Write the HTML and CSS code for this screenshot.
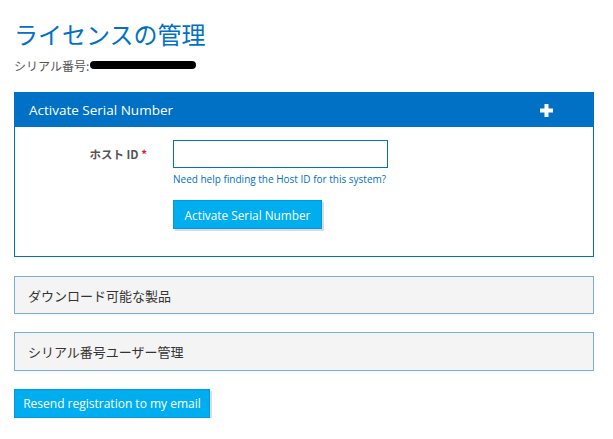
FILE: index.html
```html
<!DOCTYPE html>
<html lang="ja">
  <head>
    <meta charset="UTF-8" />
    <meta name="viewport" content="width=device-width, initial-scale=1.0" />
    <title>ライセンスの管理</title>

    <link rel="stylesheet" href="styles.css">
  </head>
  <body>
    <div class="page">
      <h1>ライセンスの管理</h1>
      <div class="serial">
        シリアル番号:<span class="redacted"></span>
      </div>

      <div class="panel">
        <div class="panel-header">
          <span>Activate Serial Number</span>
          <svg class="plus" width="13" height="13" viewBox="0 0 13 13">
            <rect x="4.5" y="0" width="4" height="13" fill="#fff" />
            <rect x="0" y="4.5" width="13" height="4" fill="#fff" />
          </svg>
        </div>
        <div class="panel-body">
          <div class="form-row">
            <label class="form-label" for="host-id">ホスト ID <span class="required">*</span></label>
            <div class="form-field">
              <input type="text" id="host-id" class="text-input" />
              <a class="help-link" href="#">Need help finding the Host ID for this system?</a>
              <button class="btn btn-activate">Activate Serial Number</button>
            </div>
          </div>
        </div>
      </div>

      <div class="section">ダウンロード可能な製品</div>
      <div class="section">シリアル番号ユーザー管理</div>

      <button class="btn btn-resend">Resend registration to my email</button>
    </div>
  </body>
</html>
```

FILE: styles.css
```css
body {
  margin: 0;
  font-family: "Open Sans", "Noto Sans CJK JP", sans-serif;
  color: #333;
  background: #fff;
}
.page {
  width: 580px;
  padding: 0 14px;
}
h1 {
  margin: 18px 0 0;
  font-family: "Noto Sans CJK JP", sans-serif;
  font-size: 24px;
  font-weight: normal;
  line-height: 32px;
  color: #0071c5;
}
.serial {
  margin-top: 7px;
  font-family: "Noto Sans CJK JP", sans-serif;
  font-size: 12px;
  line-height: 18px;
  color: #555;
  display: flex;
  align-items: center;
}
.redacted {
  display: inline-block;
  width: 106px;
  height: 8px;
  margin: 0 0 2px 1px;
  background: #000;
  border-radius: 4px;
}
.panel {
  margin-top: 17px;
  border: 1px solid #0071c5;
}
.panel-header {
  height: 34px;
  background: #0071c5;
  color: #fff;
  font-size: 13.5px;
  display: flex;
  align-items: center;
  justify-content: space-between;
  padding: 0 40px 0 14px;
}
.panel-body {
  padding: 13px 0 27px;
}
.form-row {
  display: flex;
}
.form-label {
  width: 132px;
  text-align: right;
  padding-top: 6px;
  font-family: "Noto Sans CJK JP", sans-serif;
  font-size: 11.5px;
  font-weight: bold;
  color: #555;
}
.required {
  color: #e02020;
}
.form-field {
  margin-left: 26px;
  display: flex;
  flex-direction: column;
  align-items: flex-start;
}
.text-input {
  width: 215px;
  height: 28px;
  box-sizing: border-box;
  border: 1px solid #0071c5;
  margin: 0;
}
.help-link {
  margin-top: 5px;
  font-size: 10px;
  line-height: 13px;
  color: #0071c5;
  text-decoration: none;
}
.btn {
  margin-top: 14px;
  height: 29px;
  padding: 0;
  border: 1px solid #0098e0;
  background: #00aeef;
  color: #fff;
  font-family: "Open Sans", sans-serif;
  font-size: 12px;
  box-shadow: 2px 2px 0 #dcdcdc;
  cursor: pointer;
}
.btn-activate {
  width: 149px;
  font-size: 11.8px;
}
.section {
  margin-top: 19px;
  height: 38px;
  box-sizing: border-box;
  border: 1px solid #7aaed8;
  background: #f4f4f4;
  display: flex;
  align-items: center;
  padding-left: 13px;
  font-family: "Noto Sans CJK JP", sans-serif;
  font-size: 13px;
  color: #333;
  box-shadow: 0 2px 2px rgba(0, 0, 0, 0.03);
}
.section + .section {
  margin-top: 18px;
  height: 39px;
}
.btn-resend {
  margin-top: 18px;
  width: 196px;
}
```
